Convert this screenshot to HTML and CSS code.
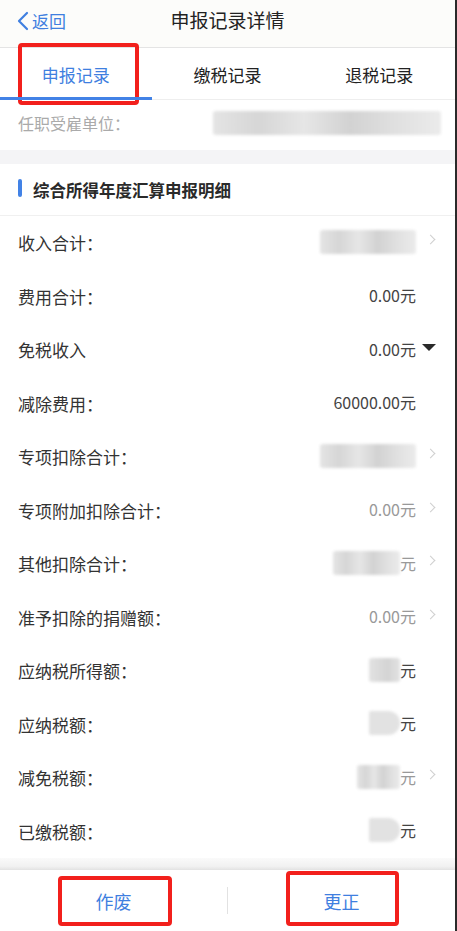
FILE: index.html
```html
<!DOCTYPE html>
<html lang="zh">
<head>
<meta charset="utf-8">
<title>申报记录详情</title>
<link rel="stylesheet" href="styles.css">
</head>
<body>
<div class="page">
  <header class="nav">
    <div class="back">
      <svg class="back-icon" width="13" height="20" viewBox="0 0 13 20"><path d="M11 2 L3 10 L11 18" fill="none" stroke="#3f7fe0" stroke-width="2.2" stroke-linecap="round" stroke-linejoin="round"/></svg>
      <span>返回</span>
    </div>
    <div class="nav-title">申报记录详情</div>
  </header>

  <nav class="tabs">
    <div class="tab active"><span>申报记录</span><i class="mark mark-tab"></i></div>
    <div class="tab"><span>缴税记录</span></div>
    <div class="tab"><span>退税记录</span></div>
  </nav>

  <div class="employer">
    <span class="employer-label">任职受雇单位：</span>
    <span class="blur blur-employer"></span>
  </div>

  <div class="band"></div>

  <div class="section-head">
    <i class="section-bar"></i>
    <span>综合所得年度汇算申报明细</span>
  </div>

  <div class="rows">
    <div class="row"><span class="label">收入合计：</span><span class="value"><span class="blur blur-wide"></span></span><span class="slot"><i class="chev"></i></span></div>
    <div class="row"><span class="label">费用合计：</span><span class="value">0.00元</span><span class="slot"></span></div>
    <div class="row"><span class="label">免税收入</span><span class="value">0.00元</span><span class="slot"><i class="tri"></i></span></div>
    <div class="row"><span class="label">减除费用：</span><span class="value">60000.00元</span><span class="slot"></span></div>
    <div class="row"><span class="label">专项扣除合计：</span><span class="value"><span class="blur blur-wide"></span></span><span class="slot"><i class="chev"></i></span></div>
    <div class="row"><span class="label">专项附加扣除合计：</span><span class="value muted">0.00元</span><span class="slot"><i class="chev"></i></span></div>
    <div class="row"><span class="label">其他扣除合计：</span><span class="value muted"><span class="blur blur-mid"></span>元</span><span class="slot"><i class="chev"></i></span></div>
    <div class="row"><span class="label">准予扣除的捐赠额：</span><span class="value muted">0.00元</span><span class="slot"><i class="chev"></i></span></div>
    <div class="row"><span class="label">应纳税所得额：</span><span class="value"><span class="blur blur-small"></span>元</span><span class="slot"></span></div>
    <div class="row"><span class="label">应纳税额：</span><span class="value"><span class="blur blur-small round"></span>元</span><span class="slot"></span></div>
    <div class="row"><span class="label">减免税额：</span><span class="value muted"><span class="blur blur-med"></span>元</span><span class="slot"><i class="chev"></i></span></div>
    <div class="row"><span class="label">已缴税额：</span><span class="value"><span class="blur blur-small round"></span>元</span><span class="slot"></span></div>
  </div>

  <div class="shadow-band"></div>

  <footer class="actions">
    <div class="action"><span>作废</span><i class="mark mark-left"></i></div>
    <i class="divider"></i>
    <div class="action"><span>更正</span><i class="mark mark-right"></i></div>
  </footer>
</div>
</body>
</html>
```

FILE: styles.css
```css
* { box-sizing: border-box; }
html, body { margin: 0; padding: 0; background: #ffffff; }
body {
  font-family: "Noto Sans CJK SC", "Noto Sans", "Liberation Sans", sans-serif;
  color: #333;
}
.page {
  width: 457px;
  height: 931px;
  border-right: 2px solid #2a2a2a;
  overflow: hidden;
  display: flex;
  flex-direction: column;
  background: #fff;
}

/* nav */
.nav {
  height: 48px;
  flex: none;
  background: #fcfcfa;
  border-bottom: 1px solid #e4e4e4;
  display: flex;
  align-items: center;
  padding-left: 16px;
  position: relative;
}
.back {
  display: flex;
  align-items: center;
  gap: 3px;
  color: #3f7fe0;
  font-size: 17px;
  margin-top: -6px;
}
.back-icon { display: block; }
.nav-title {
  position: absolute;
  left: 0;
  right: 0;
  top: 0;
  height: 47px;
  line-height: 40px;
  text-align: center;
  font-size: 19px;
  color: #222;
  pointer-events: none;
}

/* tabs */
.tabs {
  height: 52px;
  flex: none;
  display: flex;
  background: #fff;
  border-bottom: 1px solid #eeeeee;
}
.tab {
  flex: 1;
  display: flex;
  align-items: center;
  justify-content: center;
  font-size: 17px;
  color: #222;
  position: relative;
  padding-top: 1px;
}
.tab.active { color: #3f7fe0; }
.tab.active::after {
  content: "";
  position: absolute;
  left: 0;
  right: 0;
  bottom: -1px;
  height: 3px;
  background: #4282e6;
}
.mark {
  position: absolute;
  border: 4px solid #f2201c;
  border-radius: 4px;
  pointer-events: none;
}
.mark-tab { left: 18px; top: -5px; width: 121px; height: 62px; }

/* employer */
.employer {
  height: 50px;
  flex: none;
  display: flex;
  align-items: center;
  padding: 0 14px 0 18px;
  justify-content: space-between;
}
.employer-label { color: #aaaaaa; font-size: 16px; margin-top: -4px; }

/* blurred values */
.blur {
  display: inline-block;
  height: 24px;
  border-radius: 3px;
  background: linear-gradient(90deg, #e4e4e4 0%, #d6d6d6 20%, #e6e6e6 40%, #d2d2d2 60%, #e0e0e0 80%, #ebebeb 100%);
  filter: blur(1.5px);
  vertical-align: middle;
}
.blur-employer { width: 228px; margin-top: -4px; }
.blur-wide { width: 96px; }
.blur-mid { width: 67px; }
.blur-med { width: 43px; }
.blur-small { width: 31px; background: linear-gradient(90deg, #e2e2e2, #d4d4d4 60%, #e2e2e2); }
.blur-small.round { border-radius: 2px 12px 12px 2px; background: #e2e2e2; }

.band {
  height: 14px;
  flex: none;
  background: #f4f4f6;
}

/* section */
.section-head {
  height: 52px;
  flex: none;
  display: flex;
  align-items: center;
  gap: 11px;
  padding-left: 18px;
  border-bottom: 1px solid #f0f0f0;
  font-size: 16.5px;
  font-weight: 700;
  color: #2a2a2a;
}
.section-bar {
  width: 4px;
  height: 18px;
  border-radius: 2px;
  background: #4282e6;
  margin-top: -3px;
}

/* rows */
.rows { flex: none; }
.row {
  height: 53.5px;
  display: flex;
  align-items: center;
  padding-left: 18px;
  font-size: 17px;
}
.label { color: #333; flex: 1; }
.value {
  color: #444;
  font-size: 16px;
  display: flex;
  align-items: center;
  margin-bottom: 2px;
}
.value.muted { color: #999; }
.slot {
  width: 39px;
  flex: none;
  display: flex;
  align-items: center;
  padding-left: 6px;
}
.chev {
  display: block;
  width: 7px;
  height: 7px;
  border-top: 1.5px solid #cfcfcf;
  border-right: 1.5px solid #cfcfcf;
  transform: rotate(45deg);
  margin-left: 5px;
  margin-bottom: 6px;
}
.tri {
  display: block;
  width: 0;
  height: 0;
  border-left: 7px solid transparent;
  border-right: 7px solid transparent;
  border-top: 7px solid #2a2a2a;
  margin-left: 0;
  margin-bottom: 4px;
}

.shadow-band {
  height: 12px;
  flex: none;
  background: linear-gradient(180deg, #fafafa 0%, #f1f1f1 70%, #e2e2e2 100%);
}

/* footer */
.actions {
  flex: 1;
  display: flex;
  align-items: center;
  background: #fff;
}
.action {
  flex: 1;
  height: 100%;
  display: flex;
  align-items: center;
  justify-content: center;
  color: #3f7fe0;
  font-size: 18px;
  position: relative;
}
.divider {
  width: 1px;
  height: 27px;
  background: #e2e2e2;
}
.mark-left { left: 58px; top: 6px; width: 114px; height: 50px; }
.mark-right { left: 58px; top: 1px; width: 113px; height: 55px; }
```
